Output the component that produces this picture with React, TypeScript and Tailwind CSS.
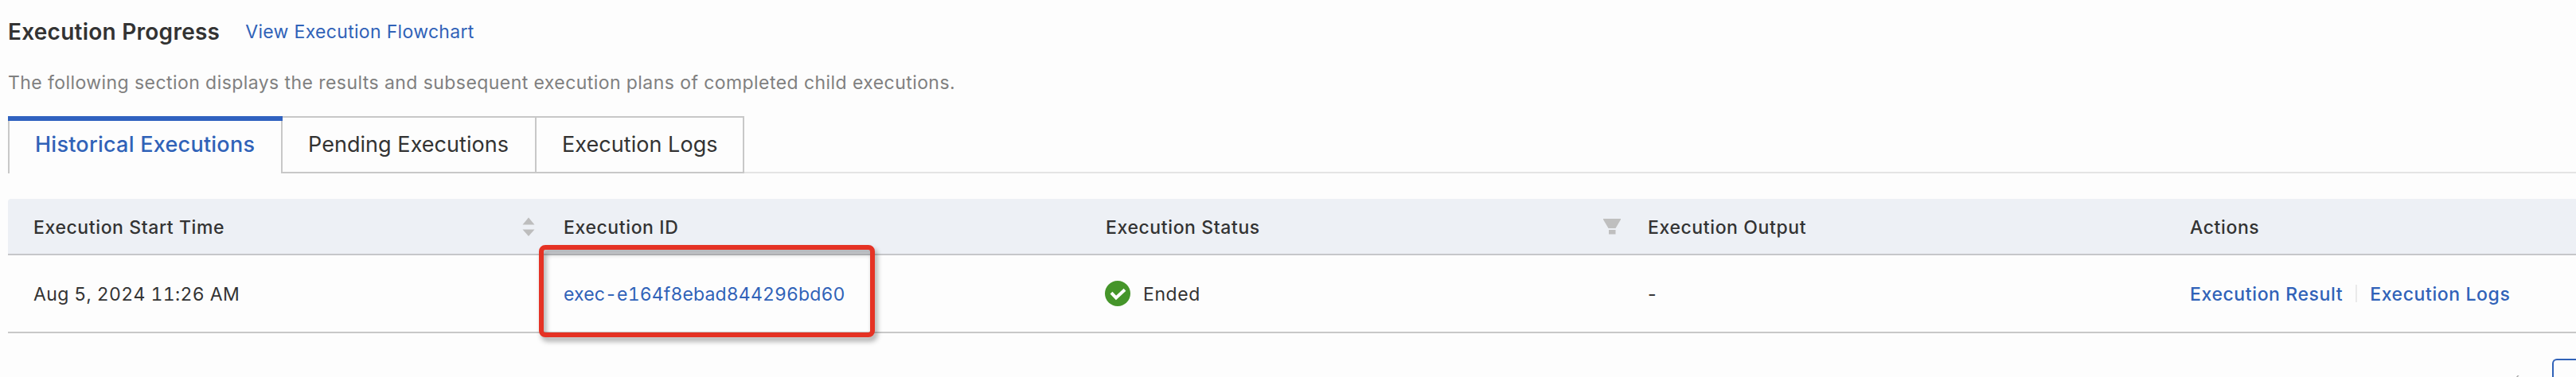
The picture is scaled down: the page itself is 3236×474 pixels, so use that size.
import React from "react";

const tabs = [
  { label: "Pending Executions", width: "w-[319px]" },
  { label: "Execution Logs", width: "w-[261px]" },
];

function SortIcon() {
  return (
    <svg width="16" height="24" viewBox="0 0 16 24" fill="#bdbdbd">
      <path d="M8 0.5L15.5 9.5H0.5z" />
      <path d="M8 24L0.5 15.5H15.5z" />
    </svg>
  );
}

function FilterIcon() {
  return (
    <svg width="22" height="20" viewBox="0 0 22 20" fill="#bfbfbf">
      <path d="M0 0H22V1L15.5 12H6.5L0 1z" />
      <path d="M7 14H15.5V19.5H7z" />
    </svg>
  );
}

function SuccessIcon() {
  return (
    <svg width="32" height="32" viewBox="0 0 32 32">
      <circle cx="16" cy="16" r="16" fill="#45952a" />
      <path d="M8 15.2L14 21.5L25 11.3" fill="none" stroke="#fff" strokeWidth="4" />
    </svg>
  );
}

function Tabs() {
  return (
    <div className="flex h-[72px] text-[27px] leading-[32px]">
      <div className="w-[345px] border-t-6 border-[#3062c0]">
        <div className="h-full border-x-2 border-[#c8c8c8] pl-8 pt-[14px] font-medium tracking-[0.25px] text-[#3062b8]">
          Historical Executions
        </div>
      </div>
      {tabs.map((tab) => (
        <div
          key={tab.label}
          className={`${tab.width} border-y-2 border-r-2 border-[#c8c8c8] pl-8 pt-[18px] tracking-[0.05px]`}
        >
          {tab.label}
        </div>
      ))}
      <div className="flex-1 border-b-2 border-[#e4e4e4]"></div>
    </div>
  );
}

function ExecutionTable() {
  return (
    <div className="mt-8 text-[23px] leading-[28px] tracking-[0.6px]">
      <div className="flex h-[71px] items-center rounded-tl border-b-2 border-[#c6c7ca] bg-[#edf0f5] font-medium">
        <div className="flex w-[664px] items-center justify-between pl-8 pr-0.5">
          <span className="pt-0.5">Execution Start Time</span>
          <SortIcon />
        </div>
        <div className="w-[681px] pl-[34px] pt-0.5">Execution ID</div>
        <div className="flex w-[681px] items-center justify-between pl-[34px]">
          <span className="pt-0.5">Execution Status</span>
          <FilterIcon />
        </div>
        <div className="w-[681px] pl-[34px] pt-0.5">Execution Output</div>
        <div className="flex-1 pl-[34px] pt-0.5">Actions</div>
      </div>

      <div className="flex h-[98px] items-center border-b-2 border-[#c8c8c8]">
        <div className="w-[664px] pl-8 pt-0.5 tabular-nums tracking-[0.38px]">Aug 5, 2024 11:26 AM</div>
        <div className="relative w-[681px] pl-[34px] pt-0.5">
          <a className="tabular-nums tracking-[0.14px] text-[#3062b8]">exec-e164f8ebad844296bd60</a>
          <div className="absolute -top-[46px] left-[3px] h-[116px] w-[422px] rounded-lg border-6 border-[#e53224] drop-shadow-[3px_5px_3px_rgba(0,0,0,0.35)]"></div>
        </div>
        <div className="flex w-[681px] items-center gap-4 pl-[33px]">
          <SuccessIcon />
          <span className="pt-0.5">Ended</span>
        </div>
        <div className="w-[681px] pl-[34px] pt-0.5">-</div>
        <div className="flex flex-1 items-center pl-[34px] font-medium text-[#3062b8]">
          <a className="pt-0.5">Execution Result</a>
          <div className="mx-4 h-[22px] w-0.5 bg-[#eaeaea]"></div>
          <a className="pt-0.5">Execution Logs</a>
        </div>
      </div>
    </div>
  );
}

export default function App() {
  return (
    <div className="h-[474px] w-[3236px] overflow-hidden bg-[#fdfdfd] pl-2.5 font-['Inter','Liberation_Sans',sans-serif] text-[#333]">
      <div className="flex h-[80px] items-center">
        <h3 className="text-[28px] font-semibold tracking-[0.25px]">Execution Progress</h3>
        <a className="ml-8 pt-px text-[23px] tracking-[0.32px] text-[#3062b8]">View Execution Flowchart</a>
      </div>
      <p className="h-[66px] pt-2.5 text-[23px] leading-[28px] tracking-[0.43px] text-[#808080]">
        The following section displays the results and subsequent execution plans of completed child executions.
      </p>
      <Tabs />
      <ExecutionTable />

      {/* pagination, cut off by the bottom edge */}
      <div className="flex justify-end pt-8">
        <div className="mt-[21px] mr-[54px] h-[30px] w-0.5 skew-x-[-40deg] bg-[#aaa]"></div>
        <div className="h-12 w-[30px] rounded-tl-md border-t-2 border-l-2 border-[#3062b8]"></div>
      </div>
    </div>
  );
}
